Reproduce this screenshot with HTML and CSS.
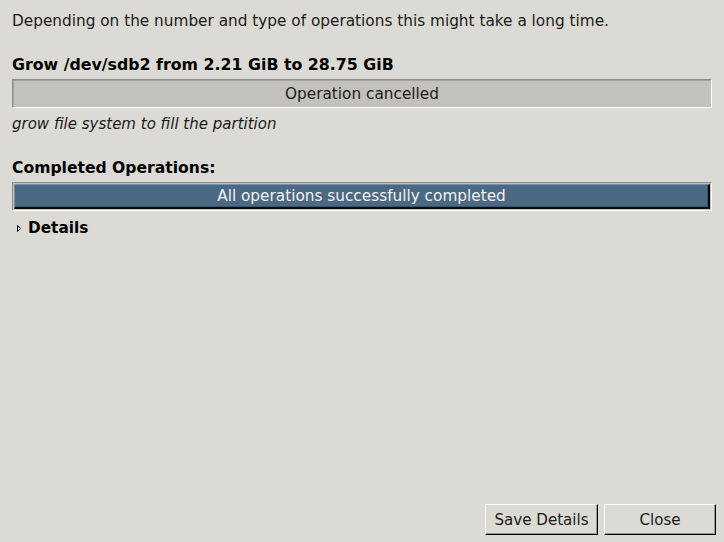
FILE: index.html
```html
<!DOCTYPE html>
<html>
<head>
<meta charset="utf-8">
<link rel="stylesheet" href="styles.css">
</head>
<body>
<div class="dialog">
  <div class="content">
    <p class="intro">Depending on the number and type of operations this might take a long time.</p>
    <p class="title grow">Grow /dev/sdb2 from 2.21 GiB to 28.75 GiB</p>
    <div class="bar bar-cancel"><span>Operation cancelled</span></div>
    <p class="sub">grow file system to fill the partition</p>
    <p class="title completed">Completed Operations:</p>
    <div class="bar bar-done"><div class="fill"><span>All operations successfully completed</span></div></div>
    <div class="expander">
      <svg class="arrow" width="6" height="9" viewBox="0 0 6 9"><path d="M1.5 1.5 L4.5 4.5 L1.5 7.5 Z" fill="#fff" stroke="#000" stroke-width="1"/></svg>
      <span class="exp-label">Details</span>
    </div>
  </div>
  <div class="actions">
    <button class="btn btn-save">Save Details</button>
    <button class="btn btn-close">Close</button>
  </div>
</div>
</body>
</html>
```
FILE: styles.css
```css
html, body {
  margin: 0;
  padding: 0;
  height: 100%;
}
body {
  background: #dcdad5;
  font-family: "DejaVu Sans", Verdana, sans-serif;
  font-size: 15.3px;
  color: #1a1a1a;
}
.dialog {
  height: 542px;
  display: flex;
  flex-direction: column;
  box-sizing: border-box;
  padding: 0 8px 7px 12px;
}
.content {
  flex: 1;
  display: flex;
  flex-direction: column;
  padding-right: 4px;
}
p {
  margin: 0;
  line-height: 18px;
  white-space: nowrap;
}
.intro {
  margin-top: 12px;
}
.title {
  font-weight: bold;
  font-size: 15.8px;
  color: #000;
}
.grow {
  margin-top: 26px;
}
.bar {
  height: 29px;
  box-sizing: border-box;
  border-top: 1px solid #8d8b86;
  border-left: 1px solid #8d8b86;
  border-bottom: 1px solid #ffffff;
  border-right: 1px solid #ffffff;
  margin-top: 5px;
}
.bar-cancel {
  background: #c3c1bb;
  box-shadow: inset 1px 1px 0 #a7a5a0;
  display: flex;
  align-items: center;
  justify-content: center;
}
.bar-cancel span {
  line-height: 18px;
}
.sub {
  font-style: italic;
  font-size: 15px;
  margin-top: 7px;
}
.completed {
  margin-top: 26px;
  font-size: 15.6px;
}
.bar-done {
  background: #c3c1bb;
  padding: 1px;
}
.fill {
  height: 100%;
  box-sizing: border-box;
  background: #4b6983;
  border-top: 1px solid #7590ab;
  border-left: 1px solid #7590ab;
  border-bottom: 2px solid #0a0a0a;
  border-right: 2px solid #0a0a0a;
  box-shadow: inset -1px -1px 0 #3c5468;
  display: flex;
  align-items: center;
  justify-content: center;
  color: #f2f2f2;
}
.fill span {
  line-height: 18px;
}
.expander {
  display: flex;
  align-items: center;
  margin-top: 8px;
  height: 18px;
}
.arrow {
  margin-left: 4px;
  margin-right: 6px;
}
.exp-label {
  font-weight: bold;
  font-size: 15.3px;
  color: #000;
}
.actions {
  display: flex;
  justify-content: flex-end;
  gap: 6px;
}
.btn {
  font-family: "DejaVu Sans", Verdana, sans-serif;
  font-size: 15.1px;
  color: #1a1a1a;
  background: #dcdad5;
  height: 31px;
  box-sizing: border-box;
  border-top: 1px solid #ffffff;
  border-left: 1px solid #ffffff;
  border-bottom: 1px solid #000000;
  border-right: 1px solid #000000;
  box-shadow: inset -1px -1px 0 #9a9893;
  padding: 0;
  margin: 0;
}
.btn-save {
  width: 113px;
}
.btn-close {
  width: 112px;
}
```
